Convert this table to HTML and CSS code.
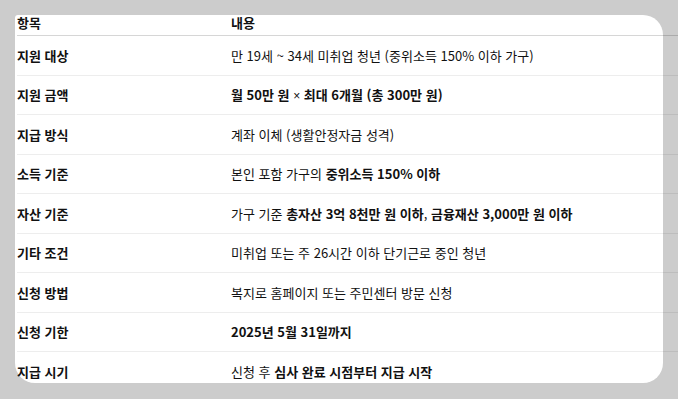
FILE: index.html
```html
<!DOCTYPE html>
<html lang="ko">
<head>
<meta charset="utf-8">
<link rel="stylesheet" href="styles.css">
</head>
<body>
<div class="card">
  <table class="info">
    <thead>
      <tr><th class="col-key">항목</th><th>내용</th></tr>
    </thead>
    <tbody>
      <tr><td class="key">지원 대상</td><td>만 19세 ~ 34세 미취업 청년 (중위소득 150% 이하 가구)</td></tr>
      <tr><td class="key">지원 금액</td><td><b>월 50만 원 <span class="times">×</span> 최대 6개월 (총 300만 원)</b></td></tr>
      <tr><td class="key">지급 방식</td><td>계좌 이체 (생활안정자금 성격)</td></tr>
      <tr><td class="key">소득 기준</td><td>본인 포함 가구의 <b>중위소득 150% 이하</b></td></tr>
      <tr><td class="key">자산 기준</td><td>가구 기준 <b>총자산 3억 8천만 원 이하</b>, <b>금융재산 3,000만 원 이하</b></td></tr>
      <tr><td class="key">기타 조건</td><td>미취업 또는 주 26시간 이하 단기근로 중인 청년</td></tr>
      <tr><td class="key">신청 방법</td><td>복지로 홈페이지 또는 주민센터 방문 신청</td></tr>
      <tr><td class="key">신청 기한</td><td><b>2025년 5월 31일까지</b></td></tr>
      <tr class="last"><td class="key">지급 시기</td><td>신청 후 <b>심사 완료 시점부터 지급 시작</b></td></tr>
    </tbody>
  </table>
</div>
</body>
</html>
```
FILE: styles.css
```css
html, body {
  margin: 0;
  padding: 0;
  overflow: hidden;
  background: #cccccc;
}
body {
  width: 678px;
  height: 399px;
  font-family: "Noto Sans CJK KR", "Noto Sans", sans-serif;
  color: #111;
}
.card {
  margin: 15px 0 0 15px;
  width: 648px;
  height: 368px;
  box-sizing: border-box;
  padding-left: 2px;
  background: #fff;
  border-radius: 3px 20px 20px 20px;
}
.info {
  border-collapse: collapse;
  width: 661px;
  font-size: 13px;
}
.info th {
  text-align: left;
  font-weight: 700;
  padding: 0 0 4px;
  line-height: 16px;
  border-bottom: 1px solid rgba(0, 0, 0, 0.16);
}
.col-key {
  width: 214px;
}
.info td {
  padding: 0;
  height: 38.5px;
  vertical-align: middle;
  border-bottom: 1px solid rgba(0, 0, 0, 0.07);
}
.info td.key {
  font-weight: 700;
}
.info b {
  font-weight: 700;
}
.times {
  font-family: "Liberation Sans", sans-serif;
  font-weight: 400;
  font-size: 12px;
}
.info tr.last td {
  border-bottom: none;
}
```
